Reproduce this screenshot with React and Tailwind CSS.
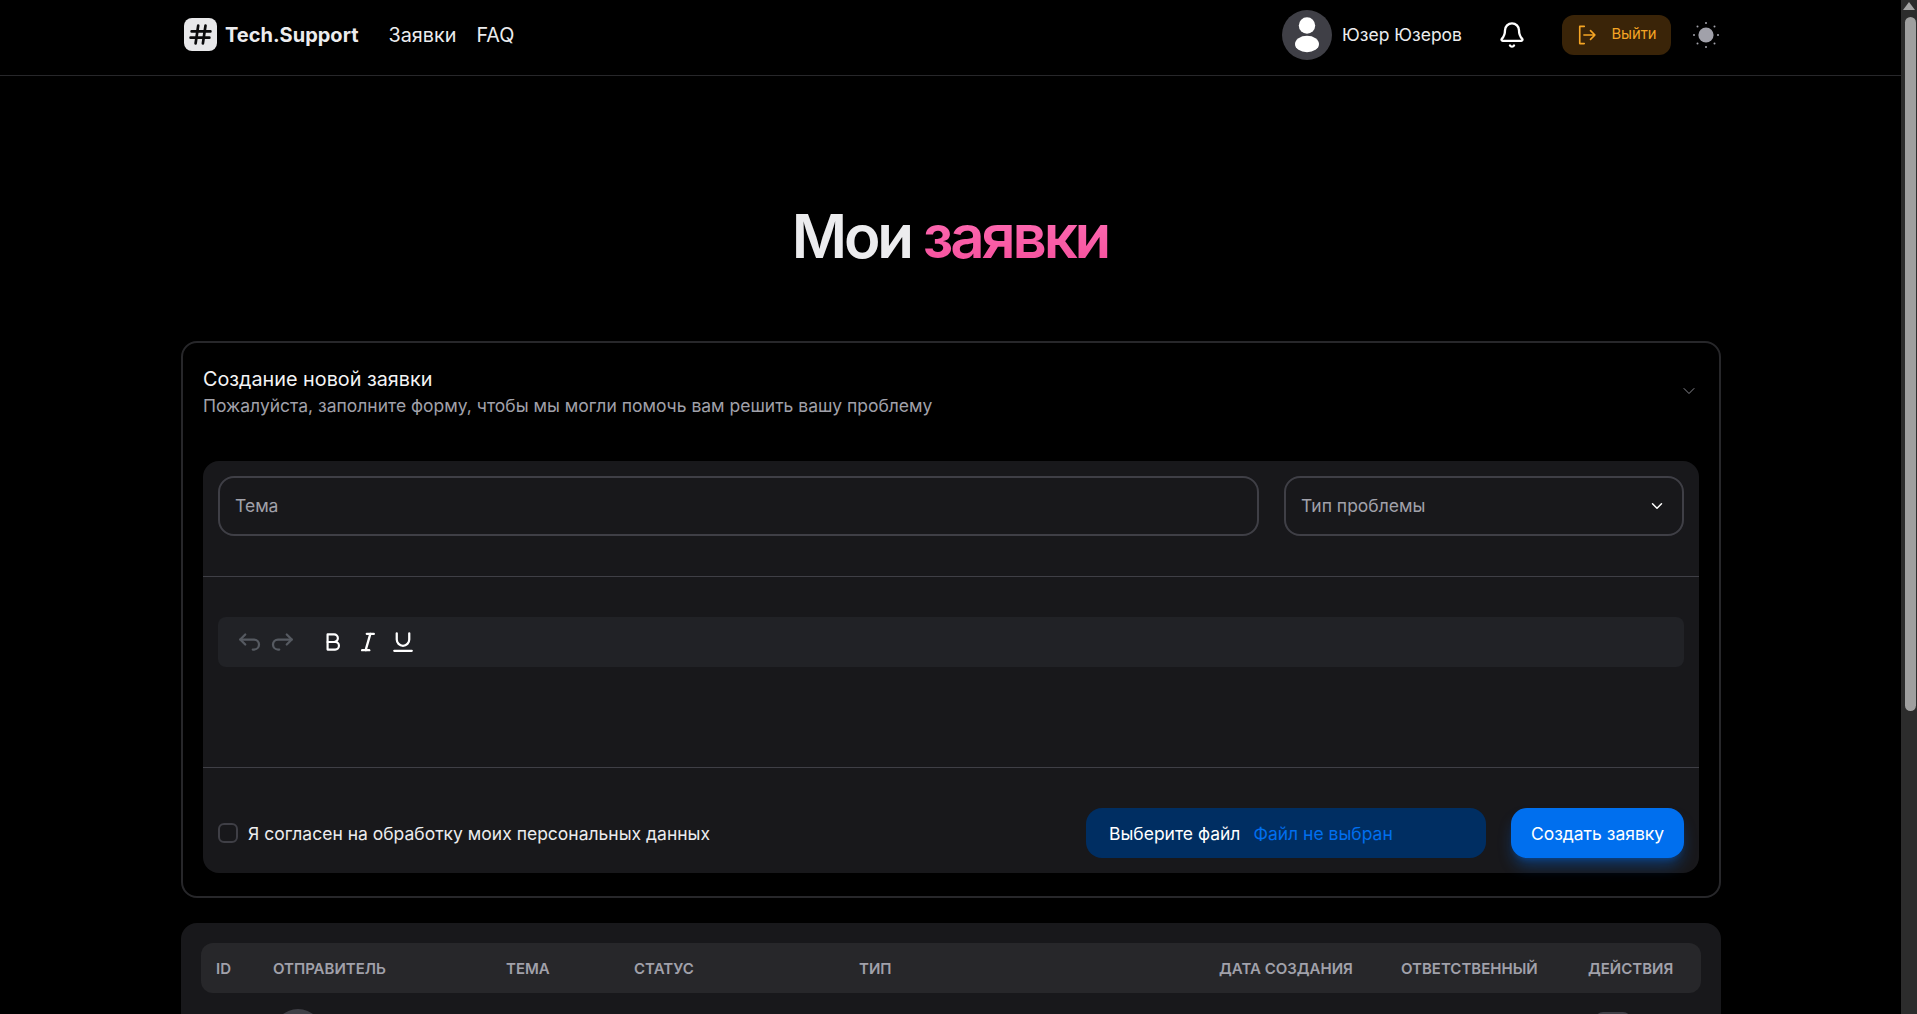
import { Bell } from 'lucide-react'
import { TbArrowBackUp, TbArrowForwardUp, TbBold, TbChevronDown, TbItalic, TbUnderline } from 'react-icons/tb'

const columns = ['ID', 'Отправитель', 'Тема', 'Статус', 'Тип', 'Дата создания', 'Ответственный', 'Действия']

function PersonIcon({ className }) {
  return (
    <svg viewBox="0 0 50 50" className={className}>
      <circle cx="25" cy="15.5" r="8.2" fill="#fff" />
      <ellipse cx="25" cy="34" rx="12" ry="8.2" fill="#fff" />
    </svg>
  )
}

function ExitIcon() {
  return (
    <svg viewBox="0 0 20 20" fill="none" stroke="currentColor" strokeWidth="1.5" strokeLinecap="round" strokeLinejoin="round" className="w-[22px] h-[22px]">
      <path d="M7.5 2.2H3.4v15.6h4.1" />
      <path d="M7.2 10h10M13.2 6l4 4-4 4" />
    </svg>
  )
}

function SunIcon() {
  const dots = [[14, 2], [14, 26], [2, 14], [26, 14], [5.5, 5.5], [22.5, 5.5], [5.5, 22.5], [22.5, 22.5]]
  return (
    <svg viewBox="0 0 28 28" className="w-7 h-7">
      <circle cx="14" cy="14" r="7.6" fill="#a1a1aa" />
      {dots.map(([x, y]) => (
        <circle key={`${x}-${y}`} cx={x} cy={y} r="1" fill="#a1a1aa" />
      ))}
    </svg>
  )
}

function LogoMark() {
  return (
    <div className="w-[33px] h-[33px] rounded-lg bg-[#e8e8ea] flex items-center justify-center">
      <svg viewBox="0 0 24 24" fill="none" stroke="#0b0b0c" strokeWidth="2.6" strokeLinecap="round" className="w-[25px] h-[25px]">
        <path d="M9.8 3.5 7.3 20.5M16.8 3.5l-2.5 17M3.5 9h18M2.5 15h18" />
      </svg>
    </div>
  )
}

function Navbar() {
  return (
    <header className="h-[76px] border-b border-[#27272a] pl-[184px] pr-[181px] pb-[6px] flex items-center justify-between">
      <div className="flex items-center">
        <LogoMark />
        <span className="ml-2 text-[20px] font-bold text-[#ececee]">Tech.Support</span>
        <nav className="ml-[30px] pt-[2px] flex items-center gap-5 text-[19.8px] text-[#ececee]">
          <span>Заявки</span>
          <span>FAQ</span>
        </nav>
      </div>
      <div className="flex items-center">
        <div className="w-[50px] h-[50px] rounded-full bg-[#3f3f46]">
          <PersonIcon className="w-[50px] h-[50px]" />
        </div>
        <span className="ml-[10px] mt-[2px] text-[17.5px] text-[#ececee]">Юзер Юзеров</span>
        <Bell className="ml-[36px] w-7 h-7 text-white" strokeWidth={2} />
        <button className="ml-[36px] w-[109px] h-10 rounded-xl bg-[#3a2408] text-[#f5a524] text-[14.8px] flex items-center justify-center gap-[13px]">
          <ExitIcon />
          Выйти
        </button>
        <div className="ml-[21px]">
          <SunIcon />
        </div>
      </div>
    </header>
  )
}

function TicketForm() {
  return (
    <section className="border-2 border-[#27272a] rounded-2xl px-[20px] pt-[19px] pb-[23px]">
      <div className="flex items-center justify-between h-[99px] pb-[41px]">
        <div>
          <h2 className="text-[19.8px] leading-7 text-[#f4f4f5]">Создание новой заявки</h2>
          <p className="text-[17.5px] leading-6 text-[#a1a1aa] mt-[1px]">
            Пожалуйста, заполните форму, чтобы мы могли помочь вам решить вашу проблему
          </p>
        </div>
        <TbChevronDown className="w-5 h-5 text-[#a1a1aa]" strokeWidth={1} />
      </div>

      <div className="bg-[#18181b] rounded-2xl">
        <div className="flex gap-[25px] p-[15px] pb-[40px] border-b border-[#3f3f46]">
          <div className="flex-1 h-[60px] border-2 border-[#3f3f46] rounded-2xl px-[15px] flex items-center text-[17.5px] text-[#a1a1aa]">
            Тема
          </div>
          <div className="w-[400px] h-[60px] border-2 border-[#3f3f46] rounded-2xl px-[15px] flex items-center justify-between text-[17.5px] text-[#a1a1aa]">
            Тип проблемы
            <TbChevronDown className="w-[18px] h-[18px] mr-[1px] text-white" strokeWidth={2} />
          </div>
        </div>

        <div className="px-[15px] pt-10 h-[191px] border-b border-[#3f3f46]">
          <div className="h-[50px] rounded-lg bg-[#212226] flex items-center pl-[14px]">
            <span className="w-[34px] flex justify-center">
              <TbArrowBackUp className="w-[30px] h-[30px] text-[#565a61]" strokeWidth={1.8} />
            </span>
            <span className="w-[34px] flex justify-center">
              <TbArrowForwardUp className="w-[30px] h-[30px] text-[#565a61]" strokeWidth={1.8} />
            </span>
            <span className="ml-4 w-[34px] flex justify-center">
              <TbBold className="w-[26px] h-[26px] text-white" strokeWidth={2} />
            </span>
            <span className="ml-[1px] w-[34px] flex justify-center">
              <TbItalic className="w-[28px] h-[28px] text-white" strokeWidth={2} />
            </span>
            <span className="ml-[1px] w-[34px] flex justify-center">
              <TbUnderline className="w-[30px] h-[30px] text-white" strokeWidth={1.8} />
            </span>
          </div>
        </div>

        <div className="flex items-center justify-between px-[15px] pt-10 pb-[15px]">
          <label className="flex items-center gap-[10px] text-[17.5px] text-[#ececee]">
            <span className="w-5 h-5 rounded-md border-2 border-[#3f3f46]" />
            <span className="mt-[2px]">Я согласен на обработку моих персональных данных</span>
          </label>
          <div className="flex items-center gap-[25px]">
            <div className="w-[400px] h-[50px] rounded-2xl bg-[#002e62] pl-[23px] pt-[2px] flex items-center text-[17.5px]">
              <span className="text-white">Выберите файл</span>
              <span className="ml-[13px] text-[#006fee]">Файл не выбран</span>
            </div>
            <button className="w-[173px] h-[50px] rounded-2xl bg-[#006fee] pt-[2px] text-white text-[17.5px] shadow-lg shadow-[#006fee]/40">
              Создать заявку
            </button>
          </div>
        </div>
      </div>
    </section>
  )
}

function TicketTable() {
  return (
    <section className="mt-[25px] bg-[#18181b] rounded-2xl px-[20px] pt-5 pb-5">
      <div className="grid grid-cols-[57px_233px_128px_225px_360px_182px_187px_1fr] items-center h-[50px] pl-[15px] pt-[2px] rounded-xl bg-[#27272a] text-[15px] font-semibold uppercase text-[#a1a1aa]">
        {columns.map((name) => (
          <div key={name}>{name}</div>
        ))}
      </div>
      <div className="grid grid-cols-[57px_233px_128px_225px_360px_182px_187px_1fr] pl-[15px] pt-4">
        <div />
        <div className="w-[50px] h-[50px] rounded-full bg-[#3f3f46]">
          <PersonIcon className="w-[50px] h-[50px]" />
        </div>
        <div className="col-start-8 mt-[3px] ml-[7px] w-9 h-9 rounded-lg bg-[#3f3f46]" />
      </div>
    </section>
  )
}

function FakeScrollbar() {
  return (
    <aside className="w-4 shrink-0 bg-[#2c2c2c] flex flex-col items-center">
      <div className="mt-[2px] h-0 w-0 border-x-[6px] border-b-[8px] border-x-transparent border-b-[#a3a3a3]" />
      <div className="mt-[7px] ml-[2px] w-[11px] h-[694px] rounded-full bg-[#9f9f9f]" />
    </aside>
  )
}

export default function App() {
  return (
    <div className="h-screen overflow-hidden flex bg-black font-['Inter',sans-serif]">
      <div className="flex-1 min-w-0">
        <Navbar />
        <main className="pl-[181px] pr-[180px]">
          <h1 className="pt-[130px] pb-[75px] pr-[2px] text-center text-[60px] leading-[60px] font-semibold tracking-[-3.2px] text-[#ececee]">
            Мои{' '}
            <span className="bg-gradient-to-b from-[#ff72b8] to-[#f54c9a] bg-clip-text text-transparent">заявки</span>
          </h1>
          <TicketForm />
          <TicketTable />
        </main>
      </div>
      <FakeScrollbar />
    </div>
  )
}
